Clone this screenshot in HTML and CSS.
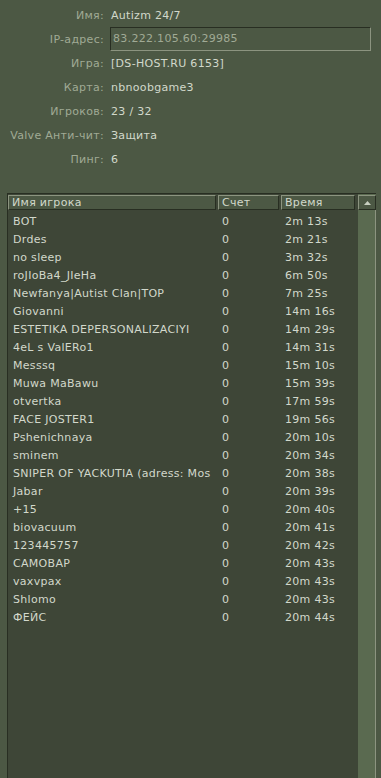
FILE: index.html
```html
<!DOCTYPE html>
<html lang="ru">
<head>
    <meta charset="UTF-8">
    <title>Server info</title>
    <link rel="stylesheet" href="styles.css">
</head>
<body>
    <div class="info">
        <div class="label">Имя:</div><div class="value">Autizm 24/7</div>
        <div class="label">IP-адрес:</div><div class="value"><div class="field">83.222.105.60:29985</div></div>
        <div class="label">Игра:</div><div class="value">[DS-HOST.RU 6153]</div>
        <div class="label">Карта:</div><div class="value">nbnoobgame3</div>
        <div class="label">Игроков:</div><div class="value">23 / 32</div>
        <div class="label">Valve Анти-чит:</div><div class="value">Защита</div>
        <div class="label">Пинг:</div><div class="value">6</div>
    </div>

    <!-- Player list -->
    <div class="list">
        <div class="rows">
            <div class="header">
                <div class="hcell name">Имя игрока</div>
                <div class="hcell score">Счет</div>
                <div class="hcell time">Время</div>
            </div>
            <div class="row"><span>BOT</span><span>0</span><span>2m 13s</span></div>
            <div class="row"><span>Drdes</span><span>0</span><span>2m 21s</span></div>
            <div class="row"><span>no sleep</span><span>0</span><span>3m 32s</span></div>
            <div class="row"><span>roJIoBa4_JIeHa</span><span>0</span><span>6m 50s</span></div>
            <div class="row"><span>Newfanya|Autist Clan|TOP</span><span>0</span><span>7m 25s</span></div>
            <div class="row"><span>Giovanni</span><span>0</span><span>14m 16s</span></div>
            <div class="row"><span>ESTETIKA DEPERSONALIZACIYI</span><span>0</span><span>14m 29s</span></div>
            <div class="row"><span>4eL s ValERo1</span><span>0</span><span>14m 31s</span></div>
            <div class="row"><span>Messsq</span><span>0</span><span>15m 10s</span></div>
            <div class="row"><span>Muwa MaBawu</span><span>0</span><span>15m 39s</span></div>
            <div class="row"><span>otvertka</span><span>0</span><span>17m 59s</span></div>
            <div class="row"><span>FACE JOSTER1</span><span>0</span><span>19m 56s</span></div>
            <div class="row"><span>Pshenichnaya</span><span>0</span><span>20m 10s</span></div>
            <div class="row"><span>sminem</span><span>0</span><span>20m 34s</span></div>
            <div class="row"><span>SNIPER OF YACKUTIA (adress: Mos</span><span>0</span><span>20m 38s</span></div>
            <div class="row"><span>Jabar</span><span>0</span><span>20m 39s</span></div>
            <div class="row"><span>+15</span><span>0</span><span>20m 40s</span></div>
            <div class="row"><span>biovacuum</span><span>0</span><span>20m 41s</span></div>
            <div class="row"><span>123445757</span><span>0</span><span>20m 42s</span></div>
            <div class="row"><span>САМОВАР</span><span>0</span><span>20m 43s</span></div>
            <div class="row"><span>vaxvpax</span><span>0</span><span>20m 43s</span></div>
            <div class="row"><span>Shlomo</span><span>0</span><span>20m 43s</span></div>
            <div class="row"><span>ФЕЙС</span><span>0</span><span>20m 44s</span></div>
        </div>
        <div class="scrollbar">
            <div class="sbtn up"><svg width="7" height="4" viewBox="0 0 7 4"><path d="M3.5 0 L7 4 L0 4 Z" fill="#c8cfc0"/></svg></div>
            <div class="track"></div>
            <div class="sbtn down"></div>
        </div>
    </div>
</body>
</html>
```
FILE: styles.css
```css
body {
    margin: 0;
    height: 778px;
    overflow: hidden;
    background: #4c5844;
    color: #d2d8cb;
    font-family: "DejaVu Sans", Tahoma, sans-serif;
    font-size: 11px;
    letter-spacing: 0.3px;
}
.info {
    display: grid;
    grid-template-columns: 104px 1fr;
    column-gap: 6px;
    grid-auto-rows: 24px;
    padding: 3px 10px 0 0;
    align-items: center;
}
.label {
    text-align: right;
    color: #a0aa95;
}
.value {
    padding-left: 1px;
}
.field {
    height: 22px;
    line-height: 22px;
    margin-left: -1px;
    padding-left: 2px;
    border: 1px solid;
    border-color: #282e22 #8c9480 #8c9480 #282e22;
    color: #a0aa95;
}
.list {
    display: flex;
    margin: 22px 5px 0 7px;
    height: 600px;
    background: #3e4637;
    border-left: 1px solid #282e22;
    border-top: 1px solid #282e22;
}
.rows {
    flex: 1;
    overflow: hidden;
}
.header {
    display: flex;
    height: 15px;
    margin: 1px 0 3px;
}
.hcell {
    box-sizing: border-box;
    background: #4c5844;
    border: 1px solid;
    border-color: #8c9480 #282e22 #282e22 #8c9480;
    padding-left: 3px;
    line-height: 13px;
    margin-right: 2px;
}
.hcell.name { width: 208px; }
.hcell.score { width: 61px; }
.hcell.time { width: 74px; }
.row {
    display: flex;
    height: 18px;
    line-height: 18px;
    white-space: nowrap;
}
.row span {
    flex-shrink: 0;
    box-sizing: border-box;
    overflow: hidden;
}
.row span:nth-child(1) { width: 214px; padding: 0 2px 0 5px; }
.row span:nth-child(2) { width: 63px; }
.row span:nth-child(3) { width: 70px; }
.scrollbar {
    width: 18px;
    display: flex;
    flex-direction: column;
    background: #5a6a50;
}
.sbtn {
    box-sizing: border-box;
    height: 15px;
    margin-top: 1px;
    display: flex;
    align-items: center;
    justify-content: center;
    background: #4c5844;
    border: 1px solid;
    border-color: #8c9480 #282e22 #282e22 #8c9480;
}
.track {
    flex: 1;
    border-right: 1px solid #8c9480;
}
.sbtn.down {
    background: #5a6a50;
    border-color: #8c9480;
}
```
